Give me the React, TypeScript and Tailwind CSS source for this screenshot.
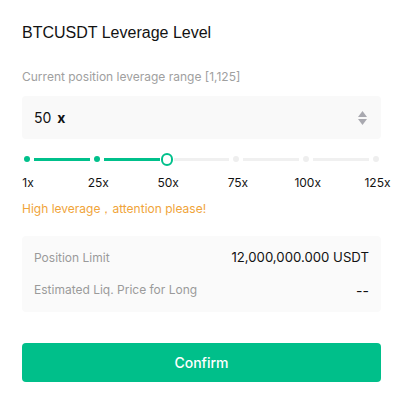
import React from "react";

const marks = [1, 25, 50, 75, 100, 125];
const current = 2; // index of 50x

export default function App() {
  return (
    <div className="w-[403px] h-[402px] bg-white font-['Inter','Noto_Sans',sans-serif] text-[#121212]">
      <div className="px-[22px] pt-[22px]">
        {/* TITLE */}
        <h1 className="text-[16px] leading-[22px] font-medium font-['Liberation_Sans',sans-serif]">
          BTCUSDT Leverage Level
        </h1>

        {/* RANGE LABEL */}
        <p className="mt-[25px] text-[12px] leading-[16px] text-[#a0a0a0]">
          Current position leverage range [1,125]
        </p>

        {/* INPUT */}
        <div className="mt-[11px] h-[43px] rounded-[4px] bg-[#f9f9f9] flex items-center pl-[12px] pr-[14px]">
          <span className="text-[14px]">50</span>
          <span className="ml-[6px] text-[14px] font-bold">x</span>
          <div className="ml-auto flex flex-col items-center gap-[2px]">
            <svg width="9" height="6" viewBox="0 0 9 6">
              <path d="M4.5 0 L9 6 L0 6 Z" fill="#a9a9b0" />
            </svg>
            <svg width="9" height="6" viewBox="0 0 9 6">
              <path d="M0 0 L9 0 L4.5 6 Z" fill="#a9a9b0" />
            </svg>
          </div>
        </div>
      </div>

      {/* SLIDER */}
      <div className="px-[21px] mt-[13px]">
        <div className="flex items-center h-[14px]">
          {marks.map((m, i) => (
            <React.Fragment key={m}>
              <div className="w-[12px] h-[12px] flex items-center justify-center shrink-0">
                {i === current ? (
                  <div className="w-[13px] h-[13px] rounded-full border-2 border-[#00c08b] bg-white" />
                ) : (
                  <div
                    className={`w-[6px] h-[6px] rounded-full ${
                      i < current ? "bg-[#00c08b]" : "bg-[#eeeeee]"
                    }`}
                  />
                )}
              </div>
              {i < marks.length - 1 && (
                <div
                  className={`flex-1 h-[3px] mx-[1px] ${
                    i < current ? "bg-[#00c08b]" : "bg-[#f0f0f0]"
                  }`}
                />
              )}
            </React.Fragment>
          ))}
        </div>
        <div className="flex mt-[9px] h-[16px]">
          {marks.map((m, i) => (
            <React.Fragment key={m}>
              <div className="w-[12px] shrink-0 flex justify-center">
                <span
                  className={`text-[12px] leading-[16px] whitespace-nowrap ${
                    i === 0 ? "pl-[2px]" : "pl-[3px]"
                  }`}
                >
                  {m}x
                </span>
              </div>
              {i < marks.length - 1 && <div className="flex-1" />}
            </React.Fragment>
          ))}
        </div>
      </div>

      <div className="px-[22px]">
        {/* WARNING */}
        <p className="mt-[10px] text-[12px] leading-[16px] text-[#f0a43a]">
          High leverage，attention please!
        </p>

        {/* INFO BOX */}
        <div className="mt-[19px] rounded-[4px] bg-[#fafafa] px-[12px] pt-[13px] pb-[13px] flex flex-col gap-[14px]">
          <div className="flex items-center justify-between h-[18px]">
            <span className="text-[12px] text-[#9a9a9a]">Position Limit</span>
            <span className="text-[13.2px]">12,000,000.000 USDT</span>
          </div>
          <div className="flex items-center justify-between h-[18px]">
            <span className="text-[12px] text-[#9a9a9a]">Estimated Liq. Price for Long</span>
            <span className="text-[14px]">--</span>
          </div>
        </div>

        {/* CONFIRM */}
        <button className="mt-[31px] w-full h-[39px] rounded-[4px] bg-[#00bf8a] text-white text-[14px] font-medium">
          Confirm
        </button>
      </div>
    </div>
  );
}
